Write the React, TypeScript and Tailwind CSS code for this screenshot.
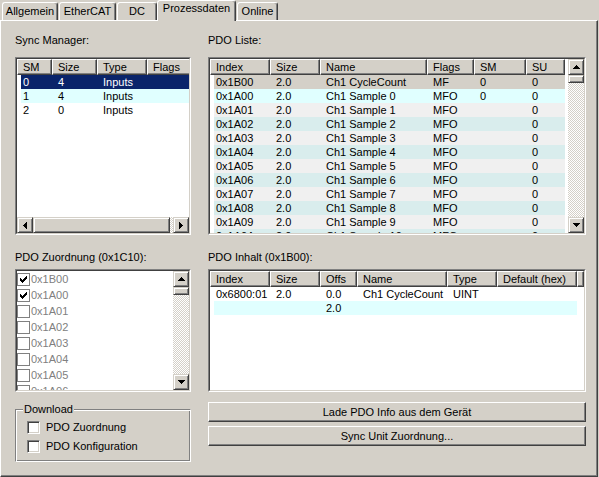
import React from "react";

type Dir = "up" | "down" | "left" | "right";

const BTN =
  "border border-t-white border-l-white border-r-[#404040] border-b-[#404040] shadow-[inset_-1px_-1px_0_#808080] bg-[#d4d0c8]";
const SBBTN =
  "border border-t-[#d4d0c8] border-l-[#d4d0c8] border-r-[#404040] border-b-[#404040] shadow-[inset_1px_1px_0_#ffffff,inset_-1px_-1px_0_#808080] bg-[#d4d0c8]";
const CHECKER =
  "bg-[repeating-conic-gradient(#d4d0c8_0%_25%,#ffffff_0%_50%)] bg-size-[2px_2px]";

const ARROWS: Record<Dir, { w: number; h: number; d: string }> = {
  up: { w: 7, h: 4, d: "M3 0h1v1H3z M2 1h3v1H2z M1 2h5v1H1z M0 3h7v1H0z" },
  down: { w: 7, h: 4, d: "M0 0h7v1H0z M1 1h5v1H1z M2 2h3v1H2z M3 3h1v1H3z" },
  left: { w: 4, h: 7, d: "M3 0h1v7H3z M2 1h1v5H2z M1 2h1v3H1z M0 3h1v1H0z" },
  right: { w: 4, h: 7, d: "M0 0h1v7H0z M1 1h1v5H1z M2 2h1v3H2z M3 3h1v1H3z" },
};

function Arrow({ dir }: { dir: Dir }) {
  const a = ARROWS[dir];
  return (
    <svg width={a.w} height={a.h} viewBox={`0 0 ${a.w} ${a.h}`} shapeRendering="crispEdges">
      <path d={a.d} fill="#000" />
    </svg>
  );
}

function SBtn({ dir }: { dir: Dir }) {
  return (
    <div className={`${SBBTN} w-[16px] h-[16px] shrink-0 flex items-center justify-center`}>
      <Arrow dir={dir} />
    </div>
  );
}

function VScroll() {
  return (
    <div className="w-[16px] shrink-0 flex flex-col h-full">
      <SBtn dir="up" />
      <div className={`${SBBTN} h-[8px] shrink-0`} />
      <div className={`flex-1 ${CHECKER}`} />
      <SBtn dir="down" />
    </div>
  );
}

function HScroll() {
  return (
    <div className="h-[16px] shrink-0 flex">
      <SBtn dir="left" />
      <div className={`${SBBTN} w-[137px] shrink-0`} />
      <div className={`flex-1 ${CHECKER}`} />
      <SBtn dir="right" />
    </div>
  );
}

function Sunken({ h, children }: { h: string; children?: React.ReactNode }) {
  return (
    <div className={`border border-t-[#808080] border-l-[#808080] border-r-white border-b-white ${h}`}>
      <div className="h-full border border-t-[#404040] border-l-[#404040] border-r-[#d4d0c8] border-b-[#d4d0c8] bg-white overflow-hidden">
        {children}
      </div>
    </div>
  );
}

function HCell({ w, children }: { w: string; children?: React.ReactNode }) {
  return (
    <div className={`${BTN} ${w} h-[16px] shrink-0 pl-[5px] leading-[14px] whitespace-nowrap overflow-hidden`}>
      {children}
    </div>
  );
}

function Row({
  cols,
  first,
  cells,
  className,
}: {
  cols: string[];
  first: string;
  cells: string[];
  className: string;
}) {
  return (
    <div className={`flex w-fit h-[14px] leading-[14px] ml-[4px] ${className}`}>
      {cells.map((c, i) => (
        <div
          key={i}
          className={`${i === 0 ? first + " pl-[2px]" : cols[i] + " pl-[6px]"} shrink-0 whitespace-nowrap overflow-hidden`}
        >
          {c}
        </div>
      ))}
    </div>
  );
}

function Tab({
  w,
  ml = "",
  selected = false,
  children,
}: {
  w: string;
  ml?: string;
  selected?: boolean;
  children: React.ReactNode;
}) {
  return (
    <div
      className={`${w} ${ml} shrink-0 border-t border-l border-r border-t-white border-l-white border-r-[#404040] rounded-t-[3px] shadow-[inset_-1px_0_0_#808080] bg-[#d4d0c8] text-center whitespace-nowrap ${
        selected ? "h-[21px] mb-[-1px] pt-[1px]" : "h-[18px] pt-[2px]"
      }`}
    >
      {children}
    </div>
  );
}

function ListCheck({ checked }: { checked: boolean }) {
  return (
    <div className="w-[13px] h-[13px] shrink-0 border border-[#808080] bg-white flex items-center justify-center">
      {checked && (
        <svg width="7" height="7" viewBox="0 0 7 7" shapeRendering="crispEdges">
          <path
            d="M6 0h1v1H6z M5 1h2v1H5z M0 2h1v1H0z M4 2h3v1H4z M0 3h2v1H0z M3 3h3v1H3z M0 4h5v1H0z M1 5h3v1H1z M2 6h1v1H2z"
            fill="#000"
          />
        </svg>
      )}
    </div>
  );
}

function Check({ label, className = "" }: { label: string; className?: string }) {
  return (
    <div className={`flex items-center gap-[6px] h-[13px] ${className}`}>
      <div className="w-[13px] h-[13px] shrink-0 bg-white border border-t-[#808080] border-l-[#808080] border-r-white border-b-white shadow-[inset_1px_1px_0_#404040,inset_-1px_-1px_0_#d4d0c8]" />
      <span className="whitespace-nowrap">{label}</span>
    </div>
  );
}

const SM_COLS = ["w-[35px]", "w-[45px]", "w-[50px]", "w-[60px]"];
const PL_COLS = ["w-[60px]", "w-[50px]", "w-[107px]", "w-[47px]", "w-[52px]", "w-[39px]"];
const PI_COLS = ["w-[60px]", "w-[50px]", "w-[37px]", "w-[90px]", "w-[50px]", "w-[80px]"];

const plRows: { cells: string[]; bg: string }[] = [
  { cells: ["0x1B00", "2.0", "Ch1 CycleCount", "MF", "0", "0"], bg: "bg-[#d4d0c8]" },
  { cells: ["0x1A00", "2.0", "Ch1 Sample 0", "MFO", "0", "0"], bg: "bg-[#e0ffff]" },
  ...[1, 2, 3, 4, 5, 6, 7, 8, 9, 10].map((n) => ({
    cells: [
      "0x1A0" + n.toString(16).toUpperCase(),
      "2.0",
      "Ch1 Sample " + n,
      "MFO",
      "",
      "0",
    ],
    bg: n % 2 === 1 ? "bg-[#f0f0f0]" : "bg-[#d9eded]",
  })),
];

const zItems: [string, boolean][] = [
  ["0x1B00", true],
  ["0x1A00", true],
  ["0x1A01", false],
  ["0x1A02", false],
  ["0x1A03", false],
  ["0x1A04", false],
  ["0x1A05", false],
  ["0x1A06", false],
];

export default function App() {
  return (
    <div className="w-[599px] h-[477px] bg-[#d4d0c8] overflow-hidden font-['Liberation_Sans',Arial,sans-serif] text-[11px] leading-[13px] text-black">
      {/* Tabs */}
      <div className="h-[20px] flex items-end pl-[2px] relative z-10">
        <Tab w="w-[56px]">Allgemein</Tab>
        <Tab w="w-[57px]" ml="ml-[1px]">EtherCAT</Tab>
        <Tab w="w-[40px]" ml="ml-[1px]">DC</Tab>
        <Tab w="w-[79px]" selected>
          Prozessdaten
        </Tab>
        <Tab w="w-[41px]" ml="ml-[1px]">Online</Tab>
      </div>

      {/* Panel */}
      <div className="w-[598px] h-[457px] border border-t-white border-l-white border-r-[#404040] border-b-[#404040] shadow-[inset_-1px_-1px_0_#808080] flex gap-[17px] pl-[14px] pt-[13px]">
        {/* Left column */}
        <div className="w-[176px] shrink-0 flex flex-col">
          <div className="h-[13px] whitespace-nowrap">Sync Manager:</div>
          <div className="mt-[10px]">
            <Sunken h="h-[178px]">
              <div className="flex flex-col h-full">
                <div className="flex-1 overflow-hidden">
                  <div className="flex">
                    <HCell w={SM_COLS[0]}>SM</HCell>
                    <HCell w={SM_COLS[1]}>Size</HCell>
                    <HCell w={SM_COLS[2]}>Type</HCell>
                    <HCell w={SM_COLS[3]}>Flags</HCell>
                  </div>
                  <Row cols={SM_COLS} first="w-[31px]" cells={["0", "4", "Inputs", ""]} className="bg-[#0a246a] text-white" />
                  <Row cols={SM_COLS} first="w-[31px]" cells={["1", "4", "Inputs", ""]} className="bg-[#e0ffff]" />
                  <Row cols={SM_COLS} first="w-[31px]" cells={["2", "0", "Inputs", ""]} className="bg-white" />
                </div>
                <HScroll />
              </div>
            </Sunken>
          </div>

          <div className="mt-[16px] h-[13px] whitespace-nowrap">PDO Zuordnung (0x1C10):</div>
          <div className="mt-[5px]">
            <Sunken h="h-[123px]">
              <div className="flex h-full">
                <div className="flex-1 overflow-hidden">
                  {zItems.map(([t, c]) => (
                    <div key={t} className="h-[16px] flex items-center text-[#808080]">
                      <ListCheck checked={c} />
                      <span className="ml-[1px]">{t}</span>
                    </div>
                  ))}
                </div>
                <VScroll />
              </div>
            </Sunken>
          </div>

          <div className="mt-[17px] h-[53px] relative border border-t-[#808080] border-l-[#808080] border-r-white border-b-white shadow-[inset_1px_1px_0_#ffffff,inset_-1px_-1px_0_#808080] pl-[11px] pt-[11px]">
            <span className="absolute left-[7px] top-[-7px] bg-[#d4d0c8] px-[1px] leading-[13px]">Download</span>
            <Check label="PDO Zuordnung" />
            <Check label="PDO Konfiguration" className="mt-[6px]" />
          </div>
        </div>

        {/* Right column */}
        <div className="w-[378px] shrink-0 flex flex-col">
          <div className="h-[13px] whitespace-nowrap">PDO Liste:</div>
          <div className="mt-[10px]">
            <Sunken h="h-[178px]">
              <div className="flex h-full">
                <div className="flex-1 overflow-hidden">
                  <div className="flex">
                    <HCell w={PL_COLS[0]}>Index</HCell>
                    <HCell w={PL_COLS[1]}>Size</HCell>
                    <HCell w={PL_COLS[2]}>Name</HCell>
                    <HCell w={PL_COLS[3]}>Flags</HCell>
                    <HCell w={PL_COLS[4]}>SM</HCell>
                    <HCell w={PL_COLS[5]}>SU</HCell>
                  </div>
                  {plRows.map((r) => (
                    <Row key={r.cells[0]} cols={PL_COLS} first="w-[56px]" cells={r.cells} className={r.bg} />
                  ))}
                </div>
                <VScroll />
              </div>
            </Sunken>
          </div>

          <div className="mt-[16px] h-[13px] whitespace-nowrap">PDO Inhalt (0x1B00):</div>
          <div className="mt-[5px]">
            <Sunken h="h-[123px]">
              <div className="flex">
                <HCell w={PI_COLS[0]}>Index</HCell>
                <HCell w={PI_COLS[1]}>Size</HCell>
                <HCell w={PI_COLS[2]}>Offs</HCell>
                <HCell w={PI_COLS[3]}>Name</HCell>
                <HCell w={PI_COLS[4]}>Type</HCell>
                <HCell w={PI_COLS[5]}>Default (hex)</HCell>
                <HCell w="flex-1"></HCell>
              </div>
              <Row cols={PI_COLS} first="w-[56px]" cells={["0x6800:01", "2.0", "0.0", "Ch1 CycleCount", "UINT", ""]} className="bg-white" />
              <Row cols={PI_COLS} first="w-[56px]" cells={["", "", "2.0", "", "", ""]} className="bg-[#e0ffff]" />
            </Sunken>
          </div>

          <div className={`${BTN} mt-[10px] h-[20px] flex items-center justify-center whitespace-nowrap`}>
            Lade PDO Info aus dem Gerät
          </div>
          <div className={`${BTN} mt-[4px] h-[20px] flex items-center justify-center whitespace-nowrap`}>
            Sync Unit Zuordnung...
          </div>
        </div>
      </div>
    </div>
  );
}
